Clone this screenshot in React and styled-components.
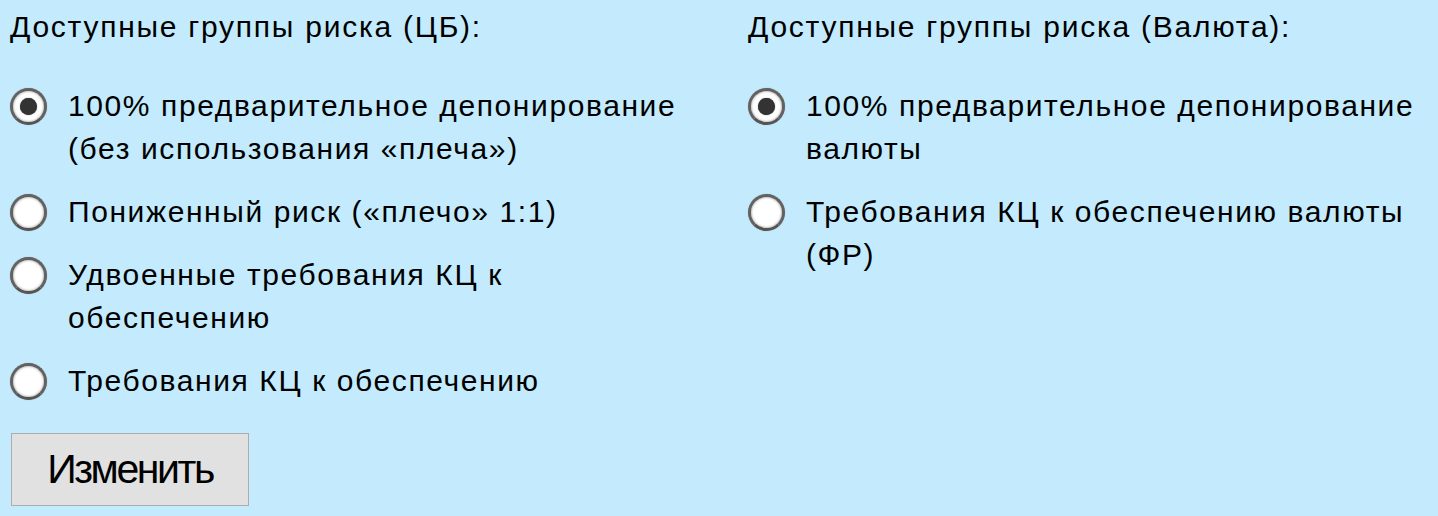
import React from "react";
import styled, { createGlobalStyle } from "styled-components";

const Global = createGlobalStyle`
  html, body { margin: 0; padding: 0; background: #c3ebfd; }
  body { font-family: "Liberation Sans", Arial, sans-serif; color: #000; }
`;

const Page = styled.div`
  display: grid;
  grid-template-columns: 738px 1fr;
  padding: 9px 0 0 10px;
  width: 1438px;
  height: 516px;
  box-sizing: border-box;
`;

const Column = styled.div`
  display: flex;
  flex-direction: column;
`;

const Title = styled.div`
  font-size: 30px;
  letter-spacing: 1.75px;
  line-height: 36px;
  margin-bottom: 39px;
`;

const Options = styled.div`
  display: flex;
  flex-direction: column;
  gap: 20px;
`;

const Option = styled.label`
  display: flex;
  align-items: flex-start;
  gap: 21px;
  cursor: pointer;
`;

const Radio = styled.span`
  flex: none;
  box-sizing: border-box;
  width: 37px;
  height: 37px;
  margin-top: 4px;
  border-radius: 50%;
  background: #fff;
  border: 3px solid #626262;
  border-bottom-color: #555;
  box-shadow: inset 0 0 2px 1px #c8c8c8, 0 0 1px #999;
  display: flex;
  align-items: center;
  justify-content: center;
  &::after {
    content: "";
    display: ${(p) => (p.$checked ? "block" : "none")};
    width: 17px;
    height: 17px;
    border-radius: 50%;
    background: #333;
    box-shadow: 0 0 1px #333;
  }
`;

const Label = styled.span`
  font-size: 30px;
  letter-spacing: 1.6px;
  line-height: 43px;
  max-width: ${(p) => p.$max}px;
`;

const Button = styled.button`
  margin-top: 31px;
  width: 238px;
  height: 73px;
  box-sizing: border-box;
  background: #e1e1e1;
  border: 1px solid #adadad;
  font-family: "Liberation Sans", Arial, sans-serif;
  font-size: 41px;
  letter-spacing: -2.4px;
  color: #000;
  padding: 0;
  align-self: flex-start;
  margin-left: 1px;
`;

const left = [
  { text: "100% предварительное депонирование (без использования «плеча»)", checked: true },
  { text: "Пониженный риск («плечо» 1:1)" },
  { text: "Удвоенные требования КЦ к обеспечению" },
  { text: "Требования КЦ к обеспечению" },
];

const right = [
  { text: "100% предварительное депонирование валюты", checked: true },
  { text: "Требования КЦ к обеспечению валюты (ФР)" },
];

export default function App() {
  return (
    <>
      <Global />
      <Page>
        <Column>
          <Title>Доступные группы риска (ЦБ):</Title>
          <Options>
            {left.map((o) => (
              <Option key={o.text}>
                <Radio $checked={o.checked} />
                <Label $max={640}>{o.text}</Label>
              </Option>
            ))}
          </Options>
          <Button>Изменить</Button>
        </Column>
        <Column>
          <Title>Доступные группы риска (Валюта):</Title>
          <Options>
            {right.map((o) => (
              <Option key={o.text}>
                <Radio $checked={o.checked} />
                <Label $max={630}>{o.text}</Label>
              </Option>
            ))}
          </Options>
        </Column>
      </Page>
    </>
  );
}
